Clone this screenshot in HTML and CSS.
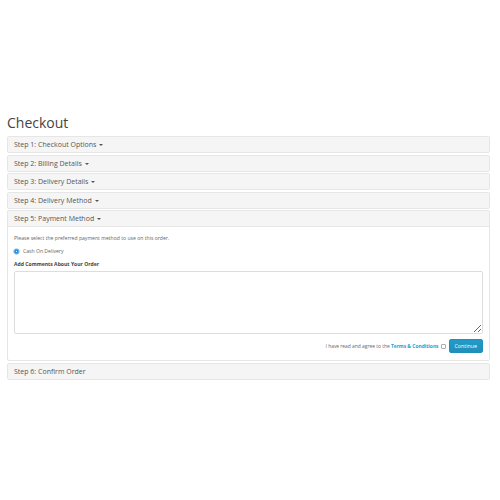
FILE: index.html
```html
<!DOCTYPE html>
<html lang="en">
<head>
  <meta charset="UTF-8" />
  <title>Checkout</title>
  <link rel="stylesheet" href="styles.css">
</head>
<body>
  <div class="container">
    <h1>Checkout</h1>

    <div class="panel">
      <div class="panel-heading">Step 1: Checkout Options <span class="caret"></span></div>
    </div>
    <div class="panel">
      <div class="panel-heading">Step 2: Billing Details <span class="caret"></span></div>
    </div>
    <div class="panel">
      <div class="panel-heading">Step 3: Delivery Details <span class="caret"></span></div>
    </div>
    <div class="panel">
      <div class="panel-heading">Step 4: Delivery Method <span class="caret"></span></div>
    </div>
    <div class="panel">
      <div class="panel-heading">Step 5: Payment Method <span class="caret"></span></div>
      <div class="panel-body">
        <p class="hint">Please select the preferred payment method to use on this order.</p>
        <label class="radio"><span class="radio-dot"></span>Cash On Delivery</label>
        <p class="comments-label">Add Comments About Your Order</p>
        <textarea class="comments"></textarea>
        <div class="buttons">
          <span class="agree">I have read and agree to the <a href="#">Terms &amp; Conditions</a></span>
          <span class="check"></span>
          <button type="button">Continue</button>
        </div>
      </div>
    </div>
    <div class="panel">
      <div class="panel-heading">Step 6: Confirm Order</div>
    </div>
  </div>
</body>
</html>
```

FILE: styles.css
```css
body {
  margin: 0;
  background: #fff;
  color: #666;
  font-family: "Open Sans", "Liberation Sans", sans-serif;
}
.container {
  padding: 113px 10px 0 7px;
}
h1 {
  margin: 0 0 3px;
  font-size: 14px;
  font-weight: 400;
  color: #444;
  line-height: 20px;
}
.panel {
  border: 1px solid #e6e6e6;
  border-radius: 2px;
  margin-bottom: 1.5px;
  background: #fff;
}
.panel-heading {
  background: #f5f5f5;
  height: 15px;
  line-height: 15px;
  padding: 0 6px;
  font-size: 7px;
  color: #555;
}
.panel .panel-heading + .panel-body {
  border-top: 1px solid #e6e6e6;
}
.caret {
  display: inline-block;
  width: 0;
  height: 0;
  border-top: 2px solid #555;
  border-left: 2px solid transparent;
  border-right: 2px solid transparent;
  vertical-align: middle;
  margin-left: 1px;
}
.panel-body {
  padding: 8px 6px 7px 6px;
  font-size: 5.1px;
}
.hint {
  margin: 0 0 6px;
  line-height: 7px;
}
.radio {
  display: flex;
  align-items: center;
  gap: 4px;
  line-height: 7px;
  margin-bottom: 6px;
}
.radio-dot {
  width: 3px;
  height: 3px;
  border-radius: 50%;
  border: 1.5px solid #2a8fd6;
  box-shadow: 0 0 0 0.5px #5fb0e8;
  background: radial-gradient(circle, #fff 0 35%, #2a8fd6 40%);
}
.comments-label {
  margin: 0 0 3px;
  font-weight: 700;
  color: #444;
  line-height: 7px;
}
.comments {
  display: block;
  box-sizing: border-box;
  width: 100%;
  height: 63px;
  border: 1px solid #ddd;
  border-radius: 2px;
  resize: vertical;
  margin: 0;
}
.buttons {
  display: flex;
  justify-content: flex-end;
  align-items: center;
  margin-top: 5px;
  font-size: 4.9px;
  color: #666;
}
.agree a {
  color: #23a1d1;
  font-weight: 700;
  text-decoration: none;
}
.check {
  width: 3px;
  height: 3px;
  border: 0.5px solid #aaa;
  border-radius: 1px;
  margin: 0 3px 0 2px;
}
button {
  background: linear-gradient(#229ac8, #1f90bb);
  color: #fff;
  border: 1px solid #1f90bb;
  border-radius: 2px;
  font-family: inherit;
  font-size: 5.3px;
  height: 14px;
  padding: 0 5px;
  cursor: pointer;
}
```
